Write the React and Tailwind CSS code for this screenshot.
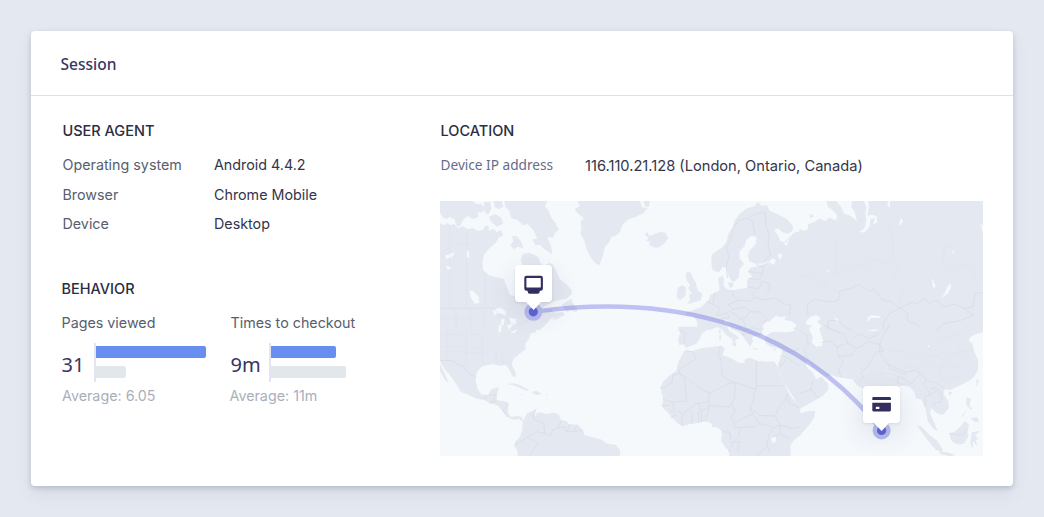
const LAND = 'fill-[#e4e8f0]';
const SEA = 'fill-[#f5f9fc]';
const LINE = 'fill-none stroke-[#d6dbe6] stroke-[2.2px]';

function WorldMap() {
  return (
    <svg className="block h-[255px] w-[543px]" viewBox="440 201 543 255" aria-hidden="true">
      <rect x="440" y="201" width="543" height="255" className={SEA} />

      {/* Canada, Arctic islands and Greenland */}
      <g transform="translate(430 195) scale(.33333)" className={LAND} strokeLinejoin="round">
        <path d="M30 18H128L140 28 154 27 164 40 155 54 142 52 146 66 128 72 112 63 99 75 90 94 80 93 73 72 58 66 49 72 35 64 30 52Z" />
        <path d="M30 85L42 91 50 84 62 91 73 87 84 100 100 94 113 103 128 99 143 108 160 104 167 90 177 96 176 109 189 101 200 112 214 105 219 122 205 129 197 144 178 160 162 180 157 202 160 226 176 240 198 247 222 252 229 273 240 300 256 303 264 283 261 258 280 242 282 218 272 196 278 178 297 173 324 185 333 207 344 214 357 203 367 207 378 226 389 251 408 266 425 286 425 298 410 311 385 315 362 323 342 336 330 350 347 344 365 341 369 351 387 354 363 371 345 391 330 405H30Z" />
        <path d="M163 22L181 20 184 42 174 59 161 48ZM190 18H215L220 35 207 43 194 35ZM176 65L197 58 215 70 219 86 201 95 185 82ZM223 18H352L345 34 355 46 363 67 376 83 387 104 374 115 370 128 351 126 363 153 367 178 347 166 330 150 317 151 307 134 322 130 309 104 292 87 280 91 262 75 244 70 238 48 227 37ZM246 123L261 124 274 141 281 161 264 155 252 163 240 151 250 139ZM395 330L408 320 424 311 431 329 442 341 440 352 422 347 410 350ZM375 355L398 350 405 359 380 373 368 375Z" />
        <path d="M443 18H571V110L558 122 544 126 536 143 525 155 518 184 508 211 495 204 483 188 471 165 463 137 451 115 455 95 451 81 462 69 444 56 434 42 450 34Z" />
        <g className={SEA}>
          <path d="M118 287L130 288 146 305 148 324 135 326 123 309ZM188 347L212 337 228 351 225 361 207 354 193 361ZM215 370L224 371 220 398 212 392ZM238 368L258 372 257 391 242 389ZM109 167L116 168 119 190 111 187ZM45 182L75 171 67 186 49 191ZM46 213L66 216 55 226Z" />
        </g>
      </g>

      {/* Europe and western Russia */}
      <g transform="translate(610 195) scale(.33333)" className={LAND} strokeLinejoin="round">
        <path d="M0 18H90L96 37 112 39 101 54 77 66 55 73 39 88 29 107 14 118 0 125Z" />
        <path d="M100 18H120L116 36 106 35ZM103 117L113 112 117 123 137 116 153 110 166 113 175 130 163 145 148 157 135 158 117 150 121 139 108 139 116 129Z" />
        <path d="M305 180L319 169 338 156 350 139 355 117 368 98 374 77 389 56 412 40 433 34 444 22 455 32 471 31 479 47 502 58 529 71 548 91 549 106 534 116 517 112 504 100 493 106 505 124 511 139 524 141 542 123 557 110 571 112V405H548L560 390 544 379 523 375 527 363 510 367 498 362 483 375 469 391 464 405H380L356 378 346 374 340 390 320 396 301 405H205V398L248 400 263 399 261 379 251 364 230 361 225 351 247 346 274 336 286 325 296 315 301 299 316 293 329 286 327 270 325 249 339 242 342 254 341 272 349 282 370 286 390 281 412 279 411 256 427 244 414 231 421 219 440 214 463 207 491 199 482 193 462 205 438 206 418 199 414 182 419 166 438 147 439 125 423 123 409 134 404 152 388 170 389 190 402 207 389 223 386 249 369 262 357 246 348 218 339 215 327 232 309 226 304 207Z" />
        <path d="M227 240L233 229 244 235 249 250 257 263 263 286 277 297 272 316 254 322 232 327 241 314 237 302 246 294 234 280 241 269 230 258ZM203 279L217 270 228 278 226 303 210 315 200 306ZM353 263L368 262 371 273 361 280Z" />
        <path d="M507 173L516 179 513 195 502 184ZM487 190L498 195 491 211 476 199ZM520 145L529 142 540 130 530 153Z" className={SEA} />
      </g>

      {/* Russia and Central Asia */}
      <g transform="translate(800 195) scale(.33333)" strokeLinejoin="round">
        <path d="M-3 110L0 95V18H549V405H-3Z" className={LAND} />
        <path d="M-6 16H79L84 36 101 46 112 64 107 76 89 68 76 79 59 70 48 79 25 88 23 104 10 107 0 102 -6 102ZM106 16H156L154 36 164 52 171 78 151 62 132 56 124 36ZM191 16H204L207 34 202 62 216 59 229 63 232 81 219 89 225 70 211 71 209 96 193 113 178 110 193 100 199 78 196 60 199 38ZM265 16H270V40L262 29ZM304 68L309 78 299 93 297 87ZM451 263L454 274 443 296 423 309 433 296 441 278ZM204 367L215 361 240 364 241 369 214 368 206 379 202 376ZM18 380L30 366 49 360 63 370 52 379 67 398 65 407H25ZM103 366L118 376 106 386 110 378ZM396 248L407 272 401 281 397 270ZM79 224L87 227 84 234ZM455 161L464 172 460 177ZM540 85L549 92V115Z" className={SEA} />
        <path d="M28 61L39 56 40 65 31 69ZM93 42L105 40 108 50 100 48Z" className={LAND} />
      </g>

      {/* United States, Mexico and the north of South America */}
      <g transform="translate(430 325) scale(.33333)" className={LAND} strokeLinejoin="round">
        <path d="M30 0H340L322 9 316 22 302 26 296 44 286 55 287 72 268 87 250 103 245 120 256 140 258 156 248 154 237 133 228 120 209 122 190 117 170 121 153 126 139 145 137 168 143 193 155 209 175 209 184 192 207 187 202 203 200 226 223 229 236 234 233 263 243 276 262 272 276 277 280 291 267 282 250 285 230 275 216 257 204 242 180 234 161 224 141 222 118 211 92 200 83 184 72 167 58 148 44 132 30 109Z" />
        <path d="M30 117L40 137 55 170 47 168 36 148 30 139ZM231 177L250 175 270 181 297 194 291 198 266 187 247 180ZM307 200L319 197 336 207 323 210 308 207ZM272 207L281 208 277 211ZM346 208L354 208 350 212Z" />
        <path d="M278 291L291 265 307 258 318 252 315 266 328 262 350 267 371 263 386 269 393 285 409 288 416 297 442 299 456 311 464 330 488 337 512 343 532 356 558 360 570 376V394H264L262 376 252 361 258 347 268 338 277 315Z" />
        <path d="M207 0H215L212 23 205 20ZM232 0H247L237 15ZM241 21L263 12 253 24ZM315 259L320 270 316 274Z" className={SEA} />
      </g>

      {/* Africa and the Mediterranean */}
      <g transform="translate(610 325) scale(.33333)" className={LAND} strokeLinejoin="round">
        <path d="M205 5H266L302 -7 321 2 336 -8 350 0 358 18 379 31 389 43 379 42 372 57 366 43 347 28 334 12 320 5 296 11 276 25 269 43 258 57 241 63 228 69 220 58 207 60 205 42 211 22ZM345 -8H466L456 14 458 29 442 32 426 36 429 48 422 65 410 51 400 35 386 22 364 11ZM363 56L379 53 376 65ZM328 12L333 18 331 28 326 24ZM327 31L334 31 333 45 328 43ZM426 69L446 71 436 74ZM489 73L499 70 494 77Z" />
        <path d="M224 77L246 79 276 69 306 66 334 62 344 69 338 91 363 99 386 113 403 114 405 102 421 98 443 108 469 110 493 109 501 124 509 148 524 172 532 196 548 221 571 246V331L553 344 541 360 542 394H359L355 376 343 364 333 348 336 320 325 309 307 305 303 294 286 289 261 295 240 297 218 304 201 293 185 277 171 260 156 246 160 221 155 203 151 188 161 167 177 153 199 137 205 110Z" />
        <path d="M472 29L489 20 520 22 551 18 571 8V245L558 231 548 212 533 190 521 166 509 145 502 128 508 108 514 92 518 75 504 70 484 66 469 57 464 43Z" />
        <path d="M0 362L12 371 26 374 28 394H0Z" />
        <path d="M458 0L470 -10H500L515 -7 540 3 556 17 530 22 498 17 475 25 463 20ZM484 338L498 335 497 351 486 354Z" className={SEA} />
      </g>

      {/* Middle East, India and south-east Asia */}
      <g transform="translate(800 325) scale(.33333)" className={LAND} strokeLinejoin="round">
        <path d="M0 0H549V22L540 42 527 46 518 57 522 78 534 106 535 132 524 152 511 166 489 177 468 187 451 195 435 193 430 207 445 228 447 249 428 270 411 265 393 249 390 266 400 287 413 318 402 313 383 289 377 251 365 224 348 220 343 202 330 186 310 180 299 184 283 207 256 232 254 276 243 298 229 285 215 243 200 196 184 190 170 180 158 163 136 160 108 156 99 150 80 154 64 145 39 125 21 108 18 124 39 143 48 163 64 155 84 176 86 192 69 212 37 231 0 251Z" />
        <path d="M0 265L24 259 46 257 43 276 27 301 0 331ZM350 299L365 305 391 332 409 345 429 373 425 382 407 374 386 349 366 323ZM418 379L440 382 466 390 451 394 421 387ZM447 324L463 322 480 306 494 288 507 299 502 319 505 334 491 357 471 358 455 349ZM516 322L543 317 525 329 535 344 526 344 533 366 519 348 517 375 511 352ZM499 218L512 219 508 244 519 252 511 253 499 240ZM512 279L531 276 537 291 523 290ZM531 160L537 168 527 186ZM444 202L457 200 450 212ZM487 269L498 254 488 278Z" />
        <path d="M35 0H68L58 12 63 28 70 47 66 63 48 65 35 52 39 35 27 15ZM202 17L224 13 240 15 218 19ZM505 45L514 34 531 27 549 22 544 40 528 50 519 58ZM382 61L390 63 386 68Z" className={SEA} />
      </g>

      {/* Borders */}
      <g transform="translate(430 195) scale(.33333)" className={LINE}>
        <path d="M30 340H190L210 362 235 376 258 392 275 384 295 376 314 357 338 352" opacity=".7" />
        <path d="M59 87V338M110 99V338M166 233V327L183 343M30 176L59 157 85 146 110 144 158 165M30 371H122M78 341V405M122 341V405M163 345V405" opacity=".3" />
      </g>
      <g transform="translate(610 195) scale(.33333)" className={LINE}>
        <path d="M353 250L349 216 356 186 350 158 365 127 369 99 387 76 409 71 428 79 435 121M409 71L443 55 466 53 467 90 478 124 474 155 482 177 461 202M438 208L460 217 458 234 415 230M459 234L447 254 415 250M415 277L447 281 456 261 477 265 480 288 469 296M370 286L369 304 387 316 418 319 435 307 424 289M435 307L464 315 495 309 522 326 542 331 538 361M387 316L354 329 369 342 403 337 420 350 409 366 390 374 376 357 360 351 369 342M314 292L309 328 288 319M309 328L330 338 321 362 352 353 356 367 333 371M420 350L447 350 471 373 458 387M400 375L407 396M458 217L484 191" />
      </g>
      <g transform="translate(800 195) scale(.33333)" className={LINE}>
        <path d="M24 361L21 330 41 312 69 318 100 321 120 311 118 290 150 280 178 268 207 289 222 282 247 315 273 320 299 339 269 355 249 385 251 405M299 339L336 322 350 327 372 311 387 325 408 316 433 335 465 327 491 340 519 336 525 295 549 292M299 339L322 354 323 378 353 389 362 405M491 340L520 360 492 372 480 377 432 386 409 405M80 405L84 376 115 378 141 400 154 405" />
        <path d="M0 246L31 239 49 264 75 257 81 280 118 290M106 130L110 160 105 240 150 215 180 207 222 230M179 207L222 193 257 206 280 185 277 120 260 80M280 185L295 219 279 247 307 283 299 339M427 210L435 150 455 160M427 210L460 218 489 206 518 225 536 279" opacity=".3" />
      </g>
      <g transform="translate(430 325) scale(.33333)" className={LINE}>
        <path d="M30 106L69 107 84 119 97 119 121 151 139 154M160 220L182 210 198 210 183 234M199 228L177 235M236 234L219 258 231 266M318 254L308 270 313 285 341 294 344 325 361 333M344 325L318 320 290 337 256 360M290 337L324 354 303 385 301 394M361 333L369 314 384 309 395 286M384 309L403 306 412 321 437 318 460 317M419 299L412 321M440 301L432 320" />
        <path d="M30 65L98 65 156 70M52 0V106M109 0V115M156 30V116M30 28H151M98 84H166M198 80V117M217 78V120M230 50L248 61 286 45" opacity=".3" />
      </g>
      <g transform="translate(610 325) scale(.33333)" className={LINE}>
        <path d="M227 77L248 80 259 101 209 132 208 146 188 151 186 173 164 188H151M208 143L282 198 299 204 358 175 376 173 361 168 336 151 333 103 323 88 332 63M208 143L224 161 229 228 187 232 158 222M299 204L296 230 258 236 231 258 218 267 202 257M296 230L296 246 274 258 265 236M376 173L375 201 373 221 358 247 323 243 299 242 286 289M439 107V194L377 173M439 183H521M439 194L431 207 433 221 420 250 429 267 397 280 371 295 363 274 375 260 367 240M420 250L450 271 495 273 510 240 523 230 532 207M429 267L448 295 493 308 510 300 496 273M533 210L535 234 567 247M510 300L546 310 570 305M371 295L375 310 393 307 384 337 368 354 364 368M393 307L433 305 448 295M364 352L389 350 383 380M364 378L355 376M493 308L477 330 471 357 477 377M510 300L509 326 489 335M509 326L539 342M273 257L276 292M265 260L267 294M247 259L246 296M218 267L215 303M187 232L193 259 181 260M154 241L176 241M180 278L199 270M336 320L360 322 363 346M438 395L471 362" />
        <path d="M206 16L225 22 222 56M514 76L540 82 568 71M511 92L532 98 512 125 508 111M532 98L571 124M369 -5L390 9 403 17 400 34M400 16L428 8 455 15M401 32L417 21 430 25" />
      </g>
      <g transform="translate(800 325) scale(.33333)" className={LINE}>
        <path d="M0 19L20 31 25 60 11 75 27 106M64 53L89 47 111 65 115 94 130 113 115 132 123 157M115 94L155 91 169 70 184 64 206 50 239 58 250 79 230 80 213 105 202 127 182 142 190 156 174 173M111 65L144 55 170 70M70 0L95 13 132 27 144 55M239 58L239 83 252 101 263 117 291 130 323 142 347 135 362 145 346 161 331 179 316 163 293 155 292 174 315 182M263 117L272 132 318 148 317 142M362 145L378 162 369 178 385 198 391 209 376 214 374 244M391 209L409 197 426 213 424 230 403 232 401 246M391 192L409 188 428 207M378 167L407 173 432 190M240 57L251 27 269 0M89 0L84 9 119 23M158 40L180 27 204 40 228 33 240 23M0 205L33 193 38 169M33 193L56 220M450 326L486 331 504 314" />
        <path d="M245 70L310 80 355 101 400 89 435 104 459 85M297 121L361 130 380 110 413 130 456 120 494 132M435 104L413 146 435 165 469 155 487 177M355 101L369 70 408 73 430 39 480 25M459 85L519 75M469 45L480 76 510 104M209 132L225 152 248 144 270 164 292 174M230 113L245 135 255 130" opacity=".3" />
      </g>

      {/* Route between the two devices */}
      <path
        d="M533.3 311.7C655 295 790 314 881.6 430.3"
        className="fill-none stroke-[#6c6ee0]/40 stroke-[4.5px]"
      />
      {[[533.3, 311.8], [881.6, 430.4]].map(([x, y]) => (
        <g key={x}>
          <circle cx={x} cy={y} r="9" className="fill-[#b7baee]" />
          <circle cx={x} cy={y} r="4.6" className="fill-[#5f64d6]" />
        </g>
      ))}
    </svg>
  );
}

function Pin({ place, children }) {
  return (
    <div className={`absolute ${place} h-[46px] w-[37px]`}>
      <div className="h-[37px] w-[37px] rounded-[4px] shadow-[0_10px_26px_2px_rgba(60,66,110,0.11),0_1px_3px_rgba(60,66,110,0.13)]" />
      <svg className="absolute inset-0 block h-[46px] w-[37px]" viewBox="0 0 37 46" aria-hidden="true">
        <path d="M4 0H33Q37 0 37 4V33Q37 37 33 37H26L18.6 45 11 37H4Q0 37 0 33V4Q0 0 4 0Z" className="fill-white" />
        {children}
      </svg>
    </div>
  );
}

function Row({ label, value }) {
  return (
    <div className="flex h-[29.5px] items-center">
      <dt className="w-[151.5px] text-[#585e70]">{label}</dt>
      <dd className="text-[#33354a]">{value}</dd>
    </div>
  );
}

function Stat({ label, value, average, valueWidth, bar, averageBar, averageShift, className }) {
  return (
    <div className={className}>
      <div className="h-5 leading-5 text-[#585e70]">{label}</div>
      <div className="mt-[10px] flex h-[39px]">
        <div className={`${valueWidth} pt-[2px] font-['Noto_Sans',sans-serif] text-[20px] leading-[39px] text-[#37345f]`}>
          {value}
        </div>
        <div className="flex h-[39px] flex-col gap-[7.5px] border-l-2 border-[#e0e5ef] pt-[2.5px]">
          <div className={`h-[12.5px] rounded-r-[2px] bg-[#688eef] ${bar}`} />
          <div className={`h-[12.5px] rounded-r-[2px] bg-[#e2e7ec] ${averageBar}`} />
        </div>
      </div>
      <div className={`mt-[4px] h-5 leading-5 text-[#a8afbb] ${averageShift}`}>{average}</div>
    </div>
  );
}

export default function App() {
  return (
    <main className="h-[517px] w-[1044px] bg-[#e4e9f1] px-[31px] pt-[31px] font-['Inter',sans-serif] text-[14.3px]">
      <section className="h-[455px] rounded-[4px] bg-white shadow-[0_2px_5px_rgba(50,60,93,0.2),0_8px_16px_rgba(50,60,93,0.09)]">
        <header className="flex h-[65px] items-center border-b border-[#dce1ec] pl-[29.5px] pt-[2px]">
          <h1 className="font-['Noto_Sans',sans-serif] text-[15.5px] font-medium leading-6 text-[#3a3662]">Session</h1>
        </header>
        <div className="flex pl-[31.5px] pt-[25px]">
          <div className="w-[378px]">
            <h2 className="h-5 text-[14.5px] font-medium leading-5 text-[#2b2d42]">USER AGENT</h2>
            <dl className="mt-[9px]">
              <Row label="Operating system" value="Android 4.4.2" />
              <Row label="Browser" value="Chrome Mobile" />
              <Row label="Device" value="Desktop" />
            </dl>
            <h2 className="-ml-px mt-[40.5px] h-5 text-[14.5px] font-medium leading-5 text-[#2b2d42]">BEHAVIOR</h2>
            <div className="-ml-px mt-[14px] flex">
              <Stat
                className="w-[169px]"
                label="Pages viewed"
                value="31"
                average="Average: 6.05"
                valueWidth="w-[32.5px]"
                bar="w-[110px]"
                averageBar="w-[30px]"
                averageShift="ml-[0.5px]"
              />
              <Stat
                label="Times to checkout"
                value="9m"
                average="Average: 11m"
                valueWidth="w-[38.5px]"
                bar="w-[65px]"
                averageBar="w-[75px]"
                averageShift="-ml-px"
              />
            </div>
          </div>
          <div>
            <h2 className="h-5 text-[14.5px] font-medium leading-5 text-[#2b2d42]">LOCATION</h2>
            <div className="mt-[9px] flex h-[30px] items-center">
              <div className="w-[144.5px] font-['Noto_Sans',sans-serif] text-[13.65px] text-[#666d88]">Device IP address</div>
              <div className="pt-[3px] text-[14.65px] text-[#33354a]">116.110.21.128 (London, Ontario, Canada)</div>
            </div>
            <div className="relative -ml-[0.5px] mt-[21px]">
              <WorldMap />
              <Pin place="left-[75px] top-[64px]">
                <path d="M11.4 10.8H25.8Q27.9 10.8 27.9 12.9V23.6Q27.9 25.8 25.8 25.8H24.8V26.2Q24.8 28.7 22.4 28.7H14.9Q12.6 28.7 12.6 26.2V25.8H11.4Q9.3 25.8 9.3 23.6V12.9Q9.3 10.8 11.4 10.8Z" className="fill-[#322e5f]" />
                <rect x="11.4" y="13" width="14.4" height="9.4" rx=".4" className="fill-white" />
              </Pin>
              <Pin place="left-[423px] top-[185px]">
                <path d="M9.3 13.9V12.2Q9.3 11.1 10.4 11.1H26.8Q27.9 11.1 27.9 12.2V13.9ZM9.3 16.8H27.9V24.3Q27.9 25.4 26.8 25.4H10.4Q9.3 25.4 9.3 24.3Z" className="fill-[#322e5f]" />
                <rect x="12.8" y="20.8" width="3.6" height="2.2" rx=".3" className="fill-white" />
              </Pin>
            </div>
          </div>
        </div>
      </section>
    </main>
  );
}
